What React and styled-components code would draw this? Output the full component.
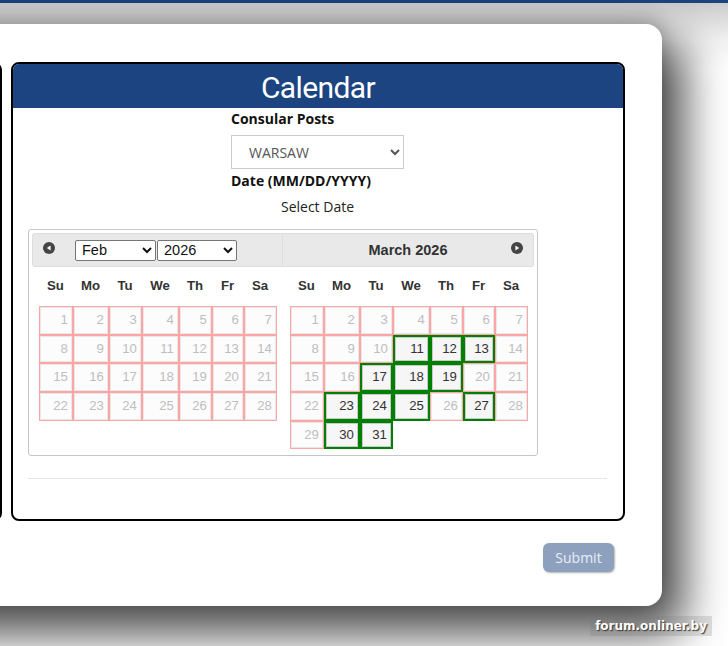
import React from 'react';
import styled, { createGlobalStyle } from 'styled-components';

const navy = '#1b4480';

const GlobalStyle = createGlobalStyle`
  html, body { margin: 0; padding: 0; }
  body {
    background: #fff;
    font-family: 'Open Sans', 'Liberation Sans', sans-serif;
    overflow: hidden;
  }
`;

const Page = styled.div`
  position: relative;
  width: 728px;
  height: 646px;
  overflow: hidden;
  background: linear-gradient(to bottom, #c9c9c9 0, #dcdcdc 18px, #f2f2f2 40px, #fff 70px);
`;

const TopStrip = styled.div`
  height: 3px;
  background: ${navy};
`;

const Stage = styled.div`
  padding-top: 21px;
`;

const Card = styled.div`
  box-sizing: border-box;
  margin-left: -100px;
  width: 762px;
  height: 582px;
  padding: 38px 37px 0 0;
  background: #fff;
  border-radius: 16px;
  box-shadow: 16px 22px 45px 6px rgba(0, 0, 0, 0.7), 0 -6px 18px rgba(0, 0, 0, 0.18);
`;

const PanelRow = styled.div`
  display: flex;
  gap: 9px;
  height: 459px;
`;

const SidePanel = styled.div`
  flex: 0 0 102px;
  box-sizing: border-box;
  border: 2px solid #000;
  border-radius: 8px;
`;

const CalendarPanel = styled.section`
  flex: 1;
  box-sizing: border-box;
  border: 2px solid #000;
  border-radius: 8px;
  overflow: hidden;
  display: flex;
  flex-direction: column;
`;

const PanelHeader = styled.header`
  height: 44px;
  box-sizing: border-box;
  padding-top: 3px;
  background: ${navy};
  color: #fff;
  font-family: Roboto, 'Open Sans', sans-serif;
  font-size: 30px;
  letter-spacing: -0.6px;
  display: flex;
  align-items: center;
  justify-content: center;
`;

const PanelBody = styled.div`
  padding: 1px 16px 0 15px;
  display: flex;
  flex-direction: column;
`;

const Field = styled.div`
  width: 173px;
  align-self: center;
`;

const Label = styled.div`
  font-weight: 700;
  font-size: 14px;
  line-height: 20px;
  color: #111;
  margin-top: ${p => p.$top || 0}px;
`;

const PostSelect = styled.select`
  display: block;
  width: 173px;
  height: 34px;
  margin-top: 6px;
  padding: 0 8px 0 13px;
  border: 1px solid #ccc;
  border-radius: 0;
  background: #fff;
  color: #555;
  font-family: 'Open Sans', sans-serif;
  font-size: 14px;
`;

const Hint = styled.div`
  margin-top: 6px;
  text-align: center;
  font-size: 14px;
  line-height: 20px;
  color: #222;
`;

const Picker = styled.div`
  box-sizing: border-box;
  width: 510px;
  margin-top: 12px;
  padding: 3px;
  border: 1px solid #c5c5c5;
  border-radius: 3px;
  display: flex;
  font-family: 'Liberation Sans', Arial, sans-serif;
  font-size: 13.2px;
  color: #333;
`;

const Group = styled.div`
  flex: 0 0 251px;
`;

const GroupHeader = styled.div`
  box-sizing: border-box;
  height: 34px;
  padding: 0 10px;
  background: #e9e9e9;
  border: 1px solid #ddd;
  border-radius: ${p => (p.$side === 'left' ? '3px 0 0 3px' : '0 3px 3px 0')};
  ${p => (p.$side === 'right' ? 'border-left: 0;' : '')}
  display: grid;
  grid-template-columns: 12px 1fr 12px;
  align-items: center;
`;

const NavIcon = styled.svg`
  width: 12px;
  height: 12px;
  margin-top: -4px;
  display: block;
`;

const SelectPair = styled.div`
  justify-self: start;
  margin-left: 20px;
  display: flex;
  gap: 1px;
`;

const SmallSelect = styled.select`
  width: ${p => p.$w}px;
  height: 21px;
  padding: 0 2px;
  border: 1px solid #767676;
  border-radius: 2px;
  background: #fff;
  color: #111;
  font-family: 'Liberation Sans', Arial, sans-serif;
  font-size: 14.5px;
`;

const MonthTitle = styled.div`
  text-align: center;
  font-weight: 700;
  font-size: 14.5px;
  color: #333;
`;

const Table = styled.table`
  width: 238px;
  margin: 3px auto 2.5px;
  border-collapse: separate;
  border-spacing: 0;
  table-layout: fixed;
`;

const Col = styled.col`
  width: ${p => p.$w}px;
`;

const DayName = styled.th`
  padding: 7px 0 11px;
  line-height: 18px;
  font-weight: 700;
  font-size: 13.2px;
  text-align: center;
  color: #333;
`;

const DayCell = styled.td`
  padding: 0;
  height: 28.7px;
  box-sizing: border-box;
  border: ${p => (p.$empty ? '0' : p.$open ? '2px solid #008000' : '1px solid #ffa5a5')};
`;

const DayLink = styled.span`
  display: block;
  box-sizing: border-box;
  height: ${p => (p.$open ? 24.7 : 26.7)}px;
  line-height: ${p => (p.$open ? 22.7 : 24.7)}px;
  padding-right: 2.6px;
  text-align: right;
  border: 1px solid ${p => (p.$open ? '#c9c9c9' : '#e8e8e8')};
  background: ${p => (p.$open ? '#f6f6f6' : '#fcfcfc')};
  color: ${p => (p.$open ? '#333' : '#bebebe')};
  font-size: 13.2px;
`;

const Divider = styled.hr`
  margin: 22px 0 0;
  border: 0;
  border-top: 1px solid #e6e6e6;
`;

const SubmitRow = styled.div`
  display: flex;
  justify-content: flex-end;
  padding-top: 22px;
`;

const SubmitButton = styled.button`
  width: 71px;
  height: 29px;
  margin-right: 11px;
  border: 0;
  border-radius: 6px;
  background: #8da1bf;
  color: #e9eef5;
  font-family: 'Open Sans', sans-serif;
  font-size: 14px;
  box-shadow: 1px 1px 2px rgba(0, 0, 0, 0.3);
`;

const Watermark = styled.div`
  position: absolute;
  right: 16px;
  bottom: 10px;
  padding: 3px 5px;
  background: rgba(120, 120, 120, 0.22);
  color: #fff;
  font-family: 'DejaVu Sans', sans-serif;
  font-weight: 700;
  font-size: 12px;
  text-shadow: 1px 1px 1px #333;
`;

const widths = [34, 36, 33, 37, 33, 32, 33];
const dayNames = ['Su', 'Mo', 'Tu', 'We', 'Th', 'Fr', 'Sa'];

function PrevIcon() {
  return (
    <NavIcon viewBox="0 0 12 12">
      <circle cx="6" cy="6" r="6" fill="#444" />
      <polygon points="7.6,3.4 3.8,6 7.6,8.6" fill="#fff" />
    </NavIcon>
  );
}

function NextIcon() {
  return (
    <NavIcon viewBox="0 0 12 12">
      <circle cx="6" cy="6" r="6" fill="#444" />
      <polygon points="4.4,3.4 8.2,6 4.4,8.6" fill="#fff" />
    </NavIcon>
  );
}

function MonthTable({ days, open = [] }) {
  const cells = [];
  for (let d = 1; d <= days; d++) cells.push(d);
  while (cells.length % 7) cells.push(null);
  const rows = [];
  for (let i = 0; i < cells.length; i += 7) rows.push(cells.slice(i, i + 7));

  return (
    <Table>
      <colgroup>
        {widths.map((w, i) => <Col key={i} $w={w} />)}
      </colgroup>
      <thead>
        <tr>
          {dayNames.map(n => <DayName key={n}>{n}</DayName>)}
        </tr>
      </thead>
      <tbody>
        {rows.map((row, r) => (
          <tr key={r}>
            {row.map((d, c) => {
              if (!d) return <DayCell key={c} $empty />;
              const isOpen = open.includes(d);
              return (
                <DayCell key={c} $open={isOpen}>
                  <DayLink $open={isOpen}>{d}</DayLink>
                </DayCell>
              );
            })}
          </tr>
        ))}
      </tbody>
    </Table>
  );
}

export default function App() {
  return (
    <Page>
      <GlobalStyle />
      <TopStrip />
      <Stage>
        <Card>
          <PanelRow>
            <SidePanel />
            <CalendarPanel>
              <PanelHeader>Calendar</PanelHeader>
              <PanelBody>
                <Field>
                  <Label>Consular Posts</Label>
                  <PostSelect defaultValue="WARSAW">
                    <option>WARSAW</option>
                  </PostSelect>
                  <Label $top={2}>Date (MM/DD/YYYY)</Label>
                </Field>
                <Hint>Select Date</Hint>
                <Picker>
                  <Group>
                    <GroupHeader $side="left">
                      <PrevIcon />
                      <SelectPair>
                        <SmallSelect $w={81} defaultValue="Feb">
                          <option>Feb</option>
                          <option>Mar</option>
                        </SmallSelect>
                        <SmallSelect $w={80} defaultValue="2026">
                          <option>2026</option>
                        </SmallSelect>
                      </SelectPair>
                    </GroupHeader>
                    <MonthTable days={28} />
                  </Group>
                  <Group>
                    <GroupHeader $side="right">
                      <span />
                      <MonthTitle>March 2026</MonthTitle>
                      <NextIcon />
                    </GroupHeader>
                    <MonthTable days={31} open={[11, 12, 13, 17, 18, 19, 23, 24, 25, 27, 30, 31]} />
                  </Group>
                </Picker>
                <Divider />
              </PanelBody>
            </CalendarPanel>
          </PanelRow>
          <SubmitRow>
            <SubmitButton>Submit</SubmitButton>
          </SubmitRow>
        </Card>
      </Stage>
      <Watermark>forum.onliner.by</Watermark>
    </Page>
  );
}
